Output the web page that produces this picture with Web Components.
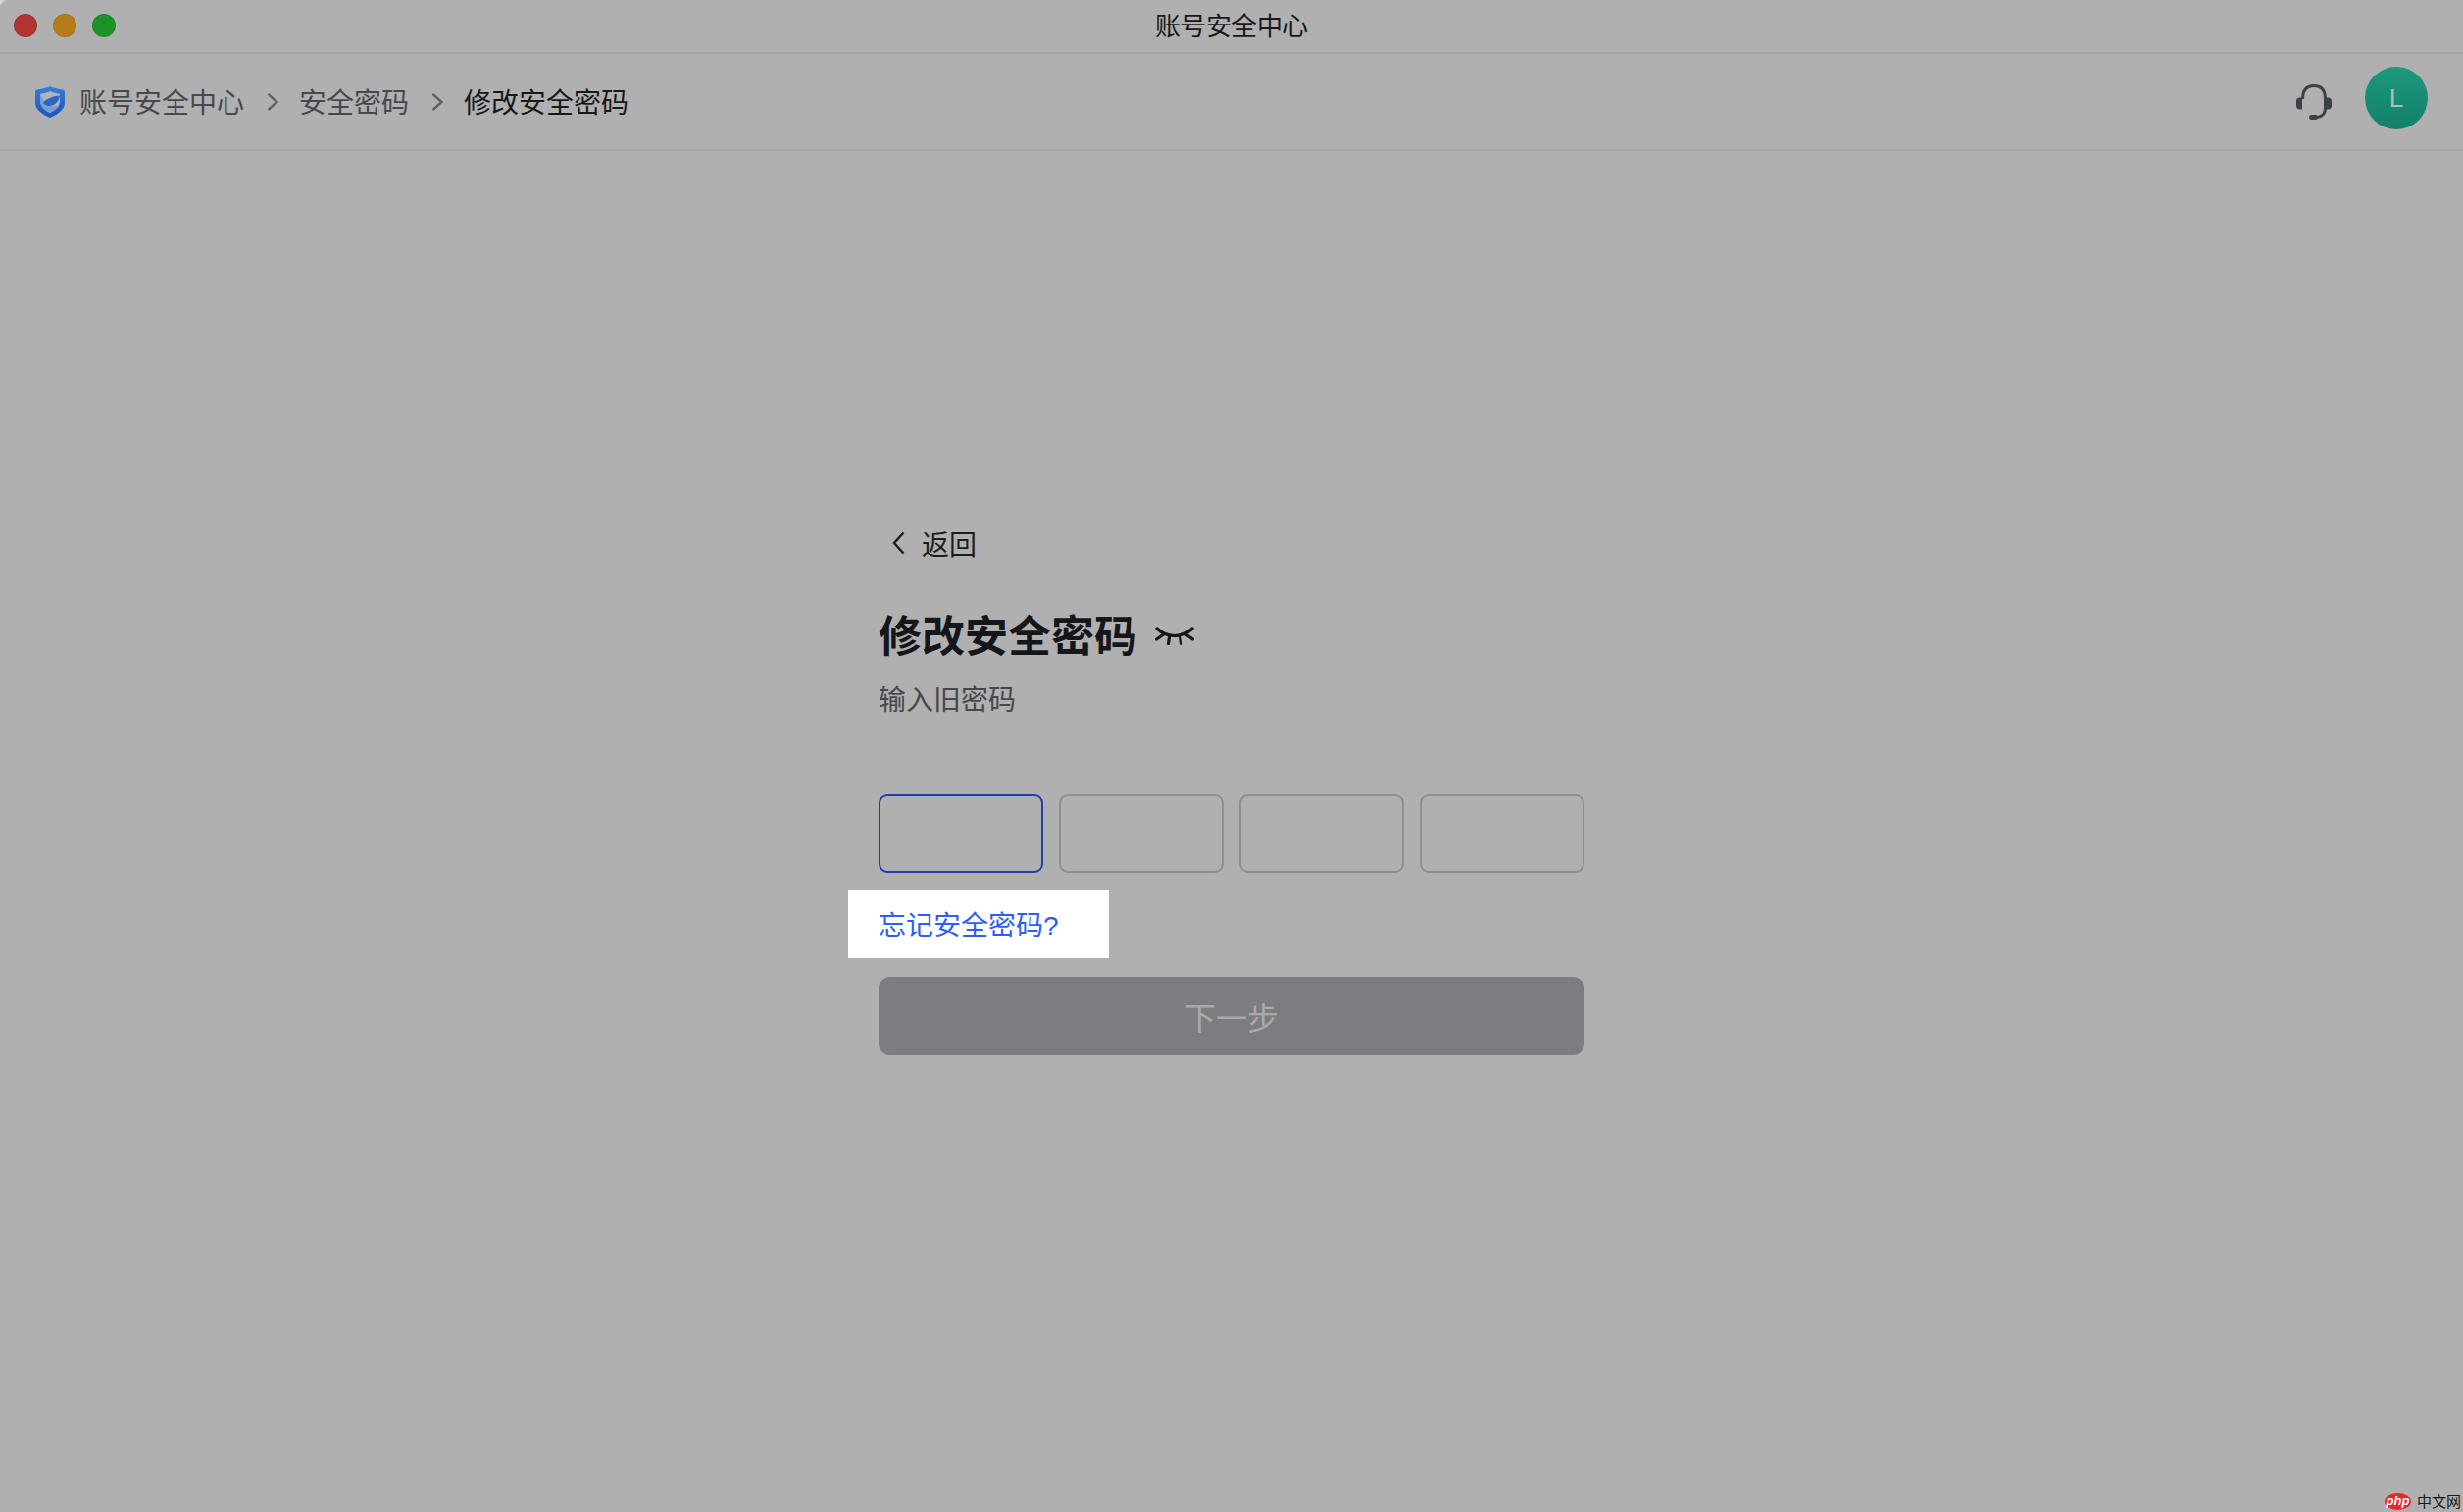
<!DOCTYPE html>
<html lang="zh">
<head>
<meta charset="utf-8">
<title>账号安全中心</title>
<style>
  html, body { margin: 0; height: 100%; background: #b0b0b0; }
  body { font-family: "Noto Sans CJK SC", "Liberation Sans", sans-serif; }
</style>
</head>
<body>
<security-app></security-app>

<script>
class TitleBar extends HTMLElement {
    constructor() {
        super();
        this.attachShadow({ mode: 'open' });
        this.shadowRoot.innerHTML = `
          <style>
            :host {
                display: grid;
                grid-template-columns: 1fr auto 1fr;
                align-items: center;
                height: 53px;
                border-bottom: 2px solid #a3a3a3;
            }
            .lights { display: flex; gap: 16px; padding-left: 14px; padding-bottom: 1px; }
            .lights span { width: 24px; height: 24px; border-radius: 50%; box-sizing: border-box; border: 1px solid rgba(0,0,0,.08); }
            .red { background: #b23333; }
            .yellow { background: #b57c1c; }
            .green { background: #1d9227; }
            .name { font-size: 26px; color: #161719; line-height: 50px; padding-bottom: 3px; }
          </style>
          <div class="lights"><span class="red"></span><span class="yellow"></span><span class="green"></span></div>
          <div class="name"><slot></slot></div>
        `;
    }
}

class CrumbBar extends HTMLElement {
    constructor() {
        super();
        this.attachShadow({ mode: 'open' });
        this.shadowRoot.innerHTML = `
          <style>
            :host {
                display: flex;
                align-items: center;
                height: 97px;
                padding: 0 36px;
                border-bottom: 2px solid #a9a9a9;
                font-size: 28px;
                color: #46484d;
            }
            span { padding-bottom: 2px; }
            .shield { width: 30px; height: 32px; margin: 0 15px 0 0; flex: none; }
            .sep { width: 12px; height: 18px; margin: 0 21px 0 23px; flex: none; }
            .current { color: #17181a; }
            .right { margin-left: auto; display: flex; align-items: center; gap: 34px; }
            .headset { width: 36px; height: 38px; display: block; }
            .avatar {
                width: 64px; height: 64px; border-radius: 50%;
                background: linear-gradient(#1b9a7d, #147f6a);
                color: #b4bcb8;
                display: flex; align-items: center; justify-content: center;
                font: 26px "Liberation Sans", sans-serif;
                margin-top: -7px;
            }
          </style>
          <svg class="shield" viewBox="0 0 30 32">
            <defs>
              <linearGradient id="sh" x1="0" y1="0" x2="0" y2="1">
                <stop offset="0" stop-color="#3a7fd4"/>
                <stop offset="1" stop-color="#1d52bd"/>
              </linearGradient>
            </defs>
            <path d="M15 0C19 2 25 3 28 3.500 29.300 3.700 30 4.600 30 6V17C30 24 22 29 15 32 8 29 0 24 0 17V6C0 4.600.7 3.700 2 3.500 5 3 11 2 15 0z" fill="url(#sh)"/>
            <path d="M15 5C18 6.300 22 7.300 25 7.800V15C25 21 20 24.500 15 27 10 24.500 5 21 5 15V7.800C8 7.300 12 6.300 15 5z" fill="#aeb3bc"/>
            <path d="M5 8V15C5 21 10 24.500 15 27 19 25 22 23 23.500 20 17 22 10 19 5 8z" fill="#7a9ccf"/>
            <path d="M8 17C11 13 17 10 25 9.500 24 16 19 20 14 20 12 20 10 19 8 17z" fill="#2a66c8"/>
          </svg>
          <span>账号安全中心</span>
          <svg class="sep" viewBox="0 0 12 18"><path d="M1.500 1 10.500 9l-9 8" fill="none" stroke="#5f6166" stroke-width="2.400"/></svg>
          <span>安全密码</span>
          <svg class="sep" viewBox="0 0 12 18"><path d="M1.500 1 10.500 9l-9 8" fill="none" stroke="#5f6166" stroke-width="2.400"/></svg>
          <span class="current">修改安全密码</span>
          <div class="right">
            <svg class="headset" viewBox="0 0 36 38">
              <path d="M6.500 16C6.500 6.500 11 2.500 18 2.500S29.500 6.500 29.500 16V25C29.500 31 26 34.500 20 34.500" fill="none" stroke="#3d4046" stroke-width="3"/>
              <path d="M6 14.500V26.500H3.500C1.500 26.500 0 25 0 23V18C0 16 1.500 14.500 3.500 14.500z" fill="#3d4046"/>
              <path d="M30 14.500V26.500H32.500C34.500 26.500 36 25 36 23V18C36 16 34.500 14.500 32.500 14.500z" fill="#3d4046"/>
              <rect x="13" y="32" width="9" height="5" rx="2.500" fill="#3d4046"/>
            </svg>
            <div class="avatar">L</div>
          </div>
        `;
    }
}

class CodeCell extends HTMLElement {
    constructor() {
        super();
        this.attachShadow({ mode: 'open' });
        this.shadowRoot.innerHTML = `
          <style>
            :host {
                display: block;
                height: 80px;
                box-sizing: border-box;
                border: 2px solid #8f8f8f;
                border-radius: 9px;
            }
            :host([active]) { border-color: #1c3fb0; }
          </style>
        `;
    }
}

class NextButton extends HTMLElement {
    constructor() {
        super();
        this.attachShadow({ mode: 'open' });
        this.shadowRoot.innerHTML = `
          <style>
            :host {
                display: flex;
                align-items: center;
                justify-content: center;
                height: 80px;
                border-radius: 12px;
                background: #7c7d81;
                color: #a9a9aa;
                font-size: 32px;
            }
          </style>
          <slot></slot>
        `;
    }
}

class PasswordForm extends HTMLElement {
    constructor() {
        super();
        this.attachShadow({ mode: 'open' });
        this.shadowRoot.innerHTML = `
          <style>
            :host { display: block; width: 720px; }
            .back {
                display: flex; align-items: center; gap: 17px;
                height: 40px; padding-left: 14px;
                font-size: 28px; color: #1c1d20;
            }
            .back svg { width: 13px; height: 24px; }
            .title {
                display: flex; align-items: center; gap: 18px;
                margin-top: 41px;
                height: 64px;
                font-size: 44px; font-weight: 700; color: #15161a;
            }
            .title span { padding-bottom: 3px; }
            .title svg { width: 40px; height: 20px; margin-top: 2px; }
            .sub { margin-top: 13px; height: 40px; line-height: 40px; font-size: 28px; color: #46484d; }
            .cells { display: grid; grid-template-columns: repeat(4, 168px); gap: 16px; margin-top: 78px; }
            .forgot {
                display: flex; align-items: center;
                box-sizing: border-box;
                width: 266px; height: 69px;
                margin: 18px 0 19px -31px;
                padding: 0 0 2px 31px;
                background: #fff;
                color: #2b5ef5;
                font-family: "Liberation Sans", "Noto Sans CJK SC", sans-serif;
                font-size: 28px;
            }
          </style>
          <div class="back">
            <svg viewBox="0 0 13 24"><path d="M11.500 1.500 2 12l9.500 10.500" fill="none" stroke="#1c1d20" stroke-width="2.400"/></svg>
            <span>返回</span>
          </div>
          <div class="title">
            <span>修改安全密码</span>
            <svg viewBox="0 0 40 20" fill="none" stroke="#15161a" stroke-width="3.200" stroke-linecap="round">
              <path d="M2 3C8 9 14 10.500 20 10.500S32 9 38 3"/>
              <path d="M1.500 14 8 9.500M38.500 14 32 9.500M14.500 11.500 13.500 18.500M25.500 11.500 26.500 18.500"/>
            </svg>
          </div>
          <div class="sub">输入旧密码</div>
          <div class="cells">
            <code-cell active></code-cell>
            <code-cell></code-cell>
            <code-cell></code-cell>
            <code-cell></code-cell>
          </div>
          <div class="forgot">忘记安全密码?</div>
          <next-button>下一步</next-button>
        `;
    }
}

class SecurityApp extends HTMLElement {
    constructor() {
        super();
        this.attachShadow({ mode: 'open' });
        this.shadowRoot.innerHTML = `
          <style>
            :host {
                display: flex;
                flex-direction: column;
                position: relative;
                height: 1542px;
                overflow: hidden;
            }
            main { display: flex; justify-content: center; padding-top: 380px; }
            .corner { position: absolute; left: 0; top: 0; width: 7px; height: 6px; }
            .mark {
                position: absolute; right: 2px; bottom: 2px;
                display: flex; align-items: center; gap: 6px;
                height: 18px;
                font: 15px/18px "Noto Sans CJK SC", sans-serif;
                color: #17181a;
            }
            .php {
                display: block; width: 27px; height: 17px; border-radius: 50%;
                background: #e8262b; color: #fff; text-align: center;
                font: italic 700 13px/16px "Liberation Sans", sans-serif;
            }
          </style>
          <title-bar>账号安全中心</title-bar>
          <crumb-bar></crumb-bar>
          <main><password-form></password-form></main>
          <svg class="corner" viewBox="0 0 7 6"><path d="M0 0H7Q2 1 0 6z" fill="#d6d6d6"/></svg>
          <div class="mark"><span class="php">php</span><span>中文网</span></div>
        `;
    }
}

customElements.define('title-bar', TitleBar);
customElements.define('crumb-bar', CrumbBar);
customElements.define('code-cell', CodeCell);
customElements.define('next-button', NextButton);
customElements.define('password-form', PasswordForm);
customElements.define('security-app', SecurityApp);
</script>
</body>
</html>
